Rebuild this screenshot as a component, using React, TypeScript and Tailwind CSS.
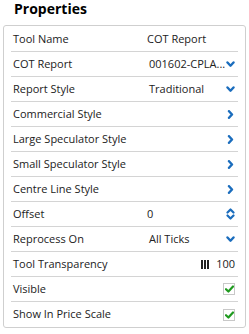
import type { ReactNode } from "react"

const BLUE = "#1b6dbd"

function ChevronDown() {
  return (
    <svg width="9" height="7" viewBox="0 0 9 7" className="shrink-0">
      <path d="M1.5 1.5 L4.5 4.7 L7.5 1.5" fill="none" stroke={BLUE} strokeWidth="2.4" strokeLinecap="round" strokeLinejoin="round" />
    </svg>
  )
}

function ChevronRight() {
  return (
    <svg width="9" height="9" viewBox="0 0 9 9" className="shrink-0">
      <path d="M3 1.2 L6 4.5 L3 7.8" fill="none" stroke={BLUE} strokeWidth="2.4" strokeLinecap="round" strokeLinejoin="round" />
    </svg>
  )
}

function UpDown() {
  return (
    <svg width="9" height="12" viewBox="0 0 9 12" className="shrink-0">
      <path d="M1.5 4.5 L4.5 1.5 L7.5 4.5" fill="none" stroke={BLUE} strokeWidth="2.2" strokeLinecap="round" strokeLinejoin="round" />
      <path d="M1.5 7.5 L4.5 10.5 L7.5 7.5" fill="none" stroke={BLUE} strokeWidth="2.2" strokeLinecap="round" strokeLinejoin="round" />
    </svg>
  )
}

function Check() {
  return (
    <span className="flex h-[12px] w-[12px] items-center justify-center border border-[#c8c8c8] bg-white">
      <svg width="9" height="8" viewBox="0 0 9 8">
        <path d="M1 4.2 L3.4 6.5 L8 1.5" fill="none" stroke="#1f9a1f" strokeWidth="2.2" strokeLinecap="round" strokeLinejoin="round" />
      </svg>
    </span>
  )
}

function Row({ label, children, last }: { label: string; children?: ReactNode; last?: boolean }) {
  return (
    <div className={`flex h-[25px] items-center ${last ? "" : "border-b border-[#d4d4d4]"}`}>
      <span className="w-[136px] shrink-0 pl-[2px]">{label}</span>
      <div className="flex min-w-0 flex-1 items-center pr-[3px]">{children}</div>
    </div>
  )
}

export default function App() {
  return (
    <div className="h-[334px] w-[249px] bg-white text-[11px] text-[#222]" style={{ fontFamily: '"Open Sans", sans-serif' }}>
      <div className="h-[25px] pl-[14px] text-[14px] font-bold leading-[17px] text-black">Properties</div>
      <div className="mx-[3px] rounded-[3px] border border-[#cfcfcf] px-[7px] pt-[1px]">
        <Row label="Tool Name">
          <span>COT Report</span>
        </Row>
        <Row label="COT Report">
          <span className="flex-1 whitespace-nowrap pl-[2px]">001602-CPLA...</span>
          <ChevronDown />
        </Row>
        <Row label="Report Style">
          <span className="flex-1 pl-[2px]">Traditional</span>
          <ChevronDown />
        </Row>
        <Row label="Commercial Style">
          <span className="flex-1" />
          <ChevronRight />
        </Row>
        <Row label="Large Speculator Style">
          <span className="flex-1" />
          <ChevronRight />
        </Row>
        <Row label="Small Speculator Style">
          <span className="flex-1" />
          <ChevronRight />
        </Row>
        <Row label="Centre Line Style">
          <span className="flex-1" />
          <ChevronRight />
        </Row>
        <Row label="Offset">
          <span className="flex-1">0</span>
          <UpDown />
        </Row>
        <Row label="Reprocess On">
          <span className="flex-1 pl-[2px]">All Ticks</span>
          <ChevronDown />
        </Row>
        <Row label="Tool Transparency">
          <span className="flex-1" />
          <span className="mr-[7px] flex h-[9px] gap-[1px]">
            <span className="w-[2px] bg-[#222]" />
            <span className="w-[2px] bg-[#222]" />
            <span className="w-[2px] bg-[#222]" />
          </span>
          <span>100</span>
        </Row>
        <Row label="Visible">
          <span className="flex-1" />
          <Check />
        </Row>
        <Row label="Show In Price Scale" last>
          <span className="flex-1" />
          <Check />
        </Row>
      </div>
    </div>
  )
}
